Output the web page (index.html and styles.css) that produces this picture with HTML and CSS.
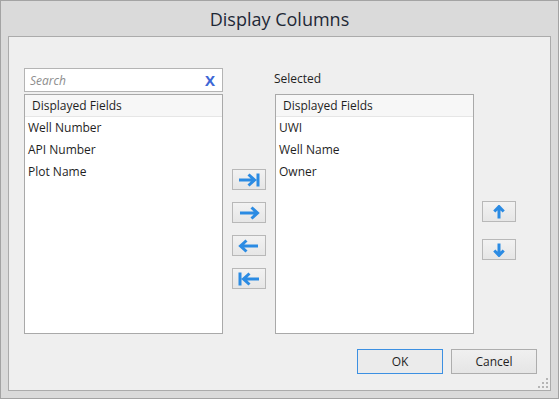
FILE: index.html
```html
<!DOCTYPE html>
<html lang="en">
<head>
    <meta charset="UTF-8">
    <meta name="viewport" content="width=device-width, initial-scale=1.0">
    <title>Display Columns</title>
    <link rel="stylesheet" href="styles.css">
</head>
<body>
    <div class="dialog">
        <div class="dialog-title">Display Columns</div>

        <div class="panel">
            <div class="columns">
                <div class="field-column">
                    <div class="search-box">
                        <span class="search-placeholder">Search</span>
                        <span class="search-clear">X</span>
                    </div>
                    <div class="field-list">
                        <div class="list-header">Displayed Fields</div>
                        <div class="list-item">Well Number</div>
                        <div class="list-item">API Number</div>
                        <div class="list-item">Plot Name</div>
                    </div>
                </div>

                <div class="move-buttons">
                    <button class="icon-btn" title="Add all">
                        <svg width="22" height="14" viewBox="0 0 22 14"><path d="M1 7H16M10.5 1.5L16.5 7L10.5 12.5M20 0.5V13.5" /></svg>
                    </button>
                    <button class="icon-btn" title="Add">
                        <svg width="22" height="14" viewBox="0 0 22 14"><path d="M2 7H19M13.5 1.5L19.5 7L13.5 12.5" /></svg>
                    </button>
                    <button class="icon-btn" title="Remove">
                        <svg width="22" height="14" viewBox="0 0 22 14"><path d="M20 7H3M8.5 1.5L2.5 7L8.5 12.5" /></svg>
                    </button>
                    <button class="icon-btn" title="Remove all">
                        <svg width="22" height="14" viewBox="0 0 22 14"><path d="M21 7H6M11.5 1.5L5.5 7L11.5 12.5M2 0.5V13.5" /></svg>
                    </button>
                </div>

                <div class="field-column">
                    <div class="column-label">Selected</div>
                    <div class="field-list">
                        <div class="list-header">Displayed Fields</div>
                        <div class="list-item">UWI</div>
                        <div class="list-item">Well Name</div>
                        <div class="list-item">Owner</div>
                    </div>
                </div>

                <div class="order-buttons">
                    <button class="icon-btn" title="Move up">
                        <svg width="12" height="14" viewBox="0 0 12 14"><path d="M6 13.5V2M1.3 6.5L6 1.6L10.7 6.5" /></svg>
                    </button>
                    <button class="icon-btn" title="Move down">
                        <svg width="12" height="14" viewBox="0 0 12 14"><path d="M6 0.5V12M1.3 7.5L6 12.4L10.7 7.5" /></svg>
                    </button>
                </div>
            </div>

            <div class="actions">
                <button class="dialog-btn default">OK</button>
                <button class="dialog-btn">Cancel</button>
            </div>
        </div>

        <div class="resize-grip">
            <span></span><span></span><span></span><span></span><span></span><span></span>
        </div>
    </div>
</body>
</html>
```

FILE: styles.css
```css
* {
    margin: 0;
    padding: 0;
    box-sizing: border-box;
}

body {
    font-family: 'Open Sans', 'Noto Sans', sans-serif;
    font-size: 12px;
    color: #1f1f1f;
    background: #d9d9d9;
}

.dialog {
    position: relative;
    width: 559px;
    height: 399px;
    background: #dadada;
    border: 1px solid #a3a3a3;
    padding: 0 7px 7px 7px;
}

.dialog-title {
    height: 35px;
    line-height: 37px;
    text-align: center;
    font-size: 18px;
    color: #1e2836;
}

.panel {
    height: 355px;
    background: #efefef;
    border: 1px solid #ababab;
    padding: 31px 13px 0 15px;
    display: flex;
    flex-direction: column;
}

.columns {
    display: flex;
    gap: 9px;
    height: 266px;
}

.field-column {
    width: 199px;
    display: flex;
    flex-direction: column;
}

.column-label {
    height: 26px;
    line-height: 22px;
    margin-left: -1px;
}

.search-box {
    height: 24px;
    background: #fff;
    border: 1px solid #b4b4b4;
    margin-bottom: 2px;
    display: flex;
    align-items: center;
    justify-content: space-between;
    padding: 0 7px 0 5px;
}

.search-placeholder {
    font-style: italic;
    color: #8d8d8d;
}

.search-clear {
    font-weight: bold;
    font-size: 15px;
    color: #3d67d6;
}

.field-list {
    flex: 1;
    background: #fff;
    border: 1px solid #a9a9a9;
}

.list-header {
    height: 22px;
    line-height: 21px;
    padding-left: 7px;
    background: #f7f7f7;
    border-bottom: 1px solid #e6e6e6;
}

.list-item {
    height: 22px;
    line-height: 22px;
    padding-left: 3px;
}

.move-buttons {
    width: 34px;
    padding-top: 101px;
    display: flex;
    flex-direction: column;
    gap: 12px;
}

.order-buttons {
    width: 34px;
    margin-left: -1px;
    padding-top: 133px;
    display: flex;
    flex-direction: column;
    gap: 17px;
}

.icon-btn {
    width: 34px;
    height: 21px;
    border: 1px solid #b8b8b8;
    background: linear-gradient(#f2f2f2, #e6e6e6);
    display: flex;
    align-items: center;
    justify-content: center;
}

.icon-btn svg path {
    fill: none;
    stroke: #2b8be3;
    stroke-width: 3;
}

.actions {
    display: flex;
    justify-content: flex-end;
    gap: 8px;
    margin-top: 15px;
}

.dialog-btn {
    width: 86px;
    height: 25px;
    font-family: inherit;
    font-size: 12px;
    color: #1f1f1f;
    border: 1px solid #adadad;
    background: linear-gradient(#f0f0f0, #e5e5e5);
}

.dialog-btn.default {
    border-color: #3c90e2;
    background: #ebebeb;
}

.resize-grip {
    position: absolute;
    right: 10px;
    bottom: 10px;
    width: 10px;
    height: 10px;
}

.resize-grip span {
    position: absolute;
    width: 2px;
    height: 2px;
    background: #b5b5b5;
}

.resize-grip span:nth-child(1) { right: 0; bottom: 0; }
.resize-grip span:nth-child(2) { right: 4px; bottom: 0; }
.resize-grip span:nth-child(3) { right: 8px; bottom: 0; }
.resize-grip span:nth-child(4) { right: 0; bottom: 4px; }
.resize-grip span:nth-child(5) { right: 4px; bottom: 4px; }
.resize-grip span:nth-child(6) { right: 0; bottom: 8px; }
```
